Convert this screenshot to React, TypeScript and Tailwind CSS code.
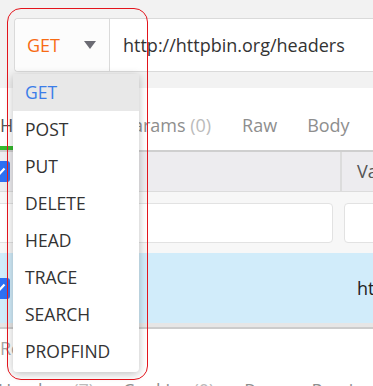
import React from "react";

function Check() {
  return (
    <div className="w-[21px] h-[21px] shrink-0 rounded-[3px] bg-[#2d6ff2] flex items-center justify-center">
      <svg width="13" height="10" viewBox="0 0 13 10">
        <polyline points="1.5,5 5,8.5 11.5,1.5" fill="none" stroke="#ffffff" strokeWidth="2.2" />
      </svg>
    </div>
  );
}

export default function App() {
  const methods = ["GET", "POST", "PUT", "DELETE", "HEAD", "TRACE", "SEARCH", "PROPFIND"];
  return (
    <div className="relative w-[373px] h-[386px] overflow-hidden bg-white font-['Open_Sans',sans-serif]">
      {/* URL bar */}
      <div className="bg-[#f2f2f2] pt-[18px] pb-[16px] pl-[14px]">
        <div className="flex h-[54px] border-y border-l border-[#dadada] rounded-l-[4px] bg-white">
          <div className="w-[95px] shrink-0 flex items-center justify-between pl-[12px] pr-[13px] border-r border-[#dadada] bg-[#fcfcfc] rounded-l-[4px]">
            <span className="text-[18px] text-[#f76b15]">GET</span>
            <svg width="12" height="8" viewBox="0 0 12 8">
              <polygon points="0,0 12,0 6,8" fill="#6b6b73" />
            </svg>
          </div>
          <div className="flex items-center pl-[13px] text-[18px] text-[#333] whitespace-nowrap">
            http://httpbin.org/headers
          </div>
        </div>
      </div>

      {/* request tabs */}
      <div className="flex h-[62px] text-[18px] leading-[24px] text-[#8e8e8e] whitespace-nowrap">
        <div className="pt-[25px] pb-[9px] border-b-4 border-[#36b92f] text-[#555]">
          Headers <span className="text-[#bbb]">(1)</span>
        </div>
        <div className="pt-[25px] ml-[26px]">
          Params <span className="text-[#bbb]">(0)</span>
        </div>
        <div className="pt-[25px] ml-[31px]">Raw</div>
        <div className="pt-[25px] ml-[30px]">Body</div>
      </div>

      {/* headers table */}
      <div className="border-t-2 border-[#cfcfcf] ml-[-11px] w-[600px]">
        <div className="flex h-[40px] bg-[#edecef] border-b border-[#dcdcdc]">
          <div className="w-[353px] shrink-0 flex items-center border-r-2 border-[#dcdcdc]">
            <Check />
          </div>
          <div className="flex items-center pl-[15px] text-[18px] text-[#555]">Value</div>
        </div>
        <div className="flex h-[61px] bg-[#f7f7f7] pt-[11px]">
          <div className="ml-[7px] w-[337px] h-[40px] bg-white border border-[#e2e2e2] rounded-[4px]" />
          <div className="ml-[11px] w-[200px] h-[40px] bg-white border border-[#e2e2e2] rounded-[4px]" />
        </div>
        <div className="flex h-[70px] items-center bg-[#d1ecfa]">
          <div className="w-[353px] shrink-0 flex items-center">
            <Check />
          </div>
          <div className="pl-[15px] text-[18px] text-[#222] whitespace-nowrap">http://httpbin.org/headers</div>
        </div>
      </div>
      <div className="h-[4px] bg-[#e6e6e6]" />
      <div className="h-[2px] bg-[#cccccc]" />

      {/* response */}
      <div className="mt-[7px] text-[18px] leading-[24px] text-[#a5a5a5]">Response</div>
      <div className="flex mt-[18px] text-[18px] leading-[24px] text-[#8e8e8e] whitespace-nowrap">
        <div className="ml-[-2px]">
          Headers <span className="text-[#bbb]">(7)</span>
        </div>
        <div className="ml-[29px]">
          Cookies <span className="text-[#bbb]">(0)</span>
        </div>
        <div className="ml-[30px]">Raw</div>
        <div className="ml-[32px]">Preview</div>
      </div>

      {/* method dropdown */}
      <div className="absolute left-[13px] top-[74px] w-[126px] bg-white pb-[2px] rounded-b-[4px] shadow-[0_2px_8px_rgba(0,0,0,0.25)]">
        {methods.map((m, i) => (
          <div
            key={m}
            className={
              i === 0
                ? "h-[37px] flex items-center pl-[12px] text-[17.5px] bg-[#e8e8e8] text-[#3b7de8]"
                : "h-[37px] flex items-center pl-[12px] text-[17.5px] text-[#333]"
            }
          >
            {m}
          </div>
        ))}
      </div>

      {/* annotation outline */}
      <div className="absolute left-[7px] top-[8px] w-[141px] h-[372px] rounded-[14px] border border-[#e3141c] pointer-events-none" />
    </div>
  );
}
